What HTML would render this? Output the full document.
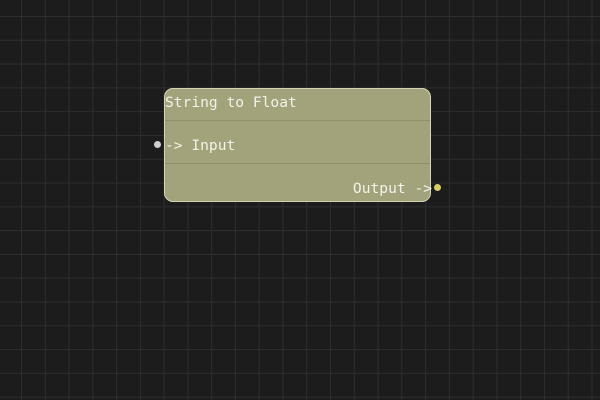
<!DOCTYPE html>
<html><head><style>
html,body{margin:0;padding:0;width:600px;height:400px;overflow:hidden;background:#1c1c1c;}
.node{position:absolute;left:164px;top:88px;width:265px;height:112px;background:#a3a37b;border:1px solid #d4d4b4;border-radius:9px;}
.sep{position:absolute;left:0;right:0;height:1px;background:#8f8f6c;}
.t{position:absolute;font-family:"DejaVu Sans Mono",monospace;font-size:14.6px;color:#f2f2ea;white-space:pre;}
.dot{position:absolute;width:7px;height:7px;border-radius:50%;}
</style></head><body>
<svg width="600" height="400" style="position:absolute;left:0;top:0">
<defs><pattern id="g" x="21" y="16" width="23.77" height="23.79" patternUnits="userSpaceOnUse">
<path d="M0.5 0V23.79M0 0.5H23.77" stroke="#2e2e2e" stroke-width="1" fill="none"/></pattern></defs>
<rect width="600" height="400" fill="url(#g)"/>
</svg>
<div class="node">
<div class="sep" style="top:31px"></div>
<div class="sep" style="top:74px"></div>
<div class="t" style="left:0;top:5px">String to Float</div>
<div class="t" style="left:0;top:48px">-&gt; Input</div>
<div class="t" style="right:-2px;top:91px">Output -&gt;</div>
</div>
<div class="dot" style="left:154px;top:141px;background:#cfcfcf"></div>
<div class="dot" style="left:434px;top:184px;background:#d6cf5e"></div>
</body></html>
